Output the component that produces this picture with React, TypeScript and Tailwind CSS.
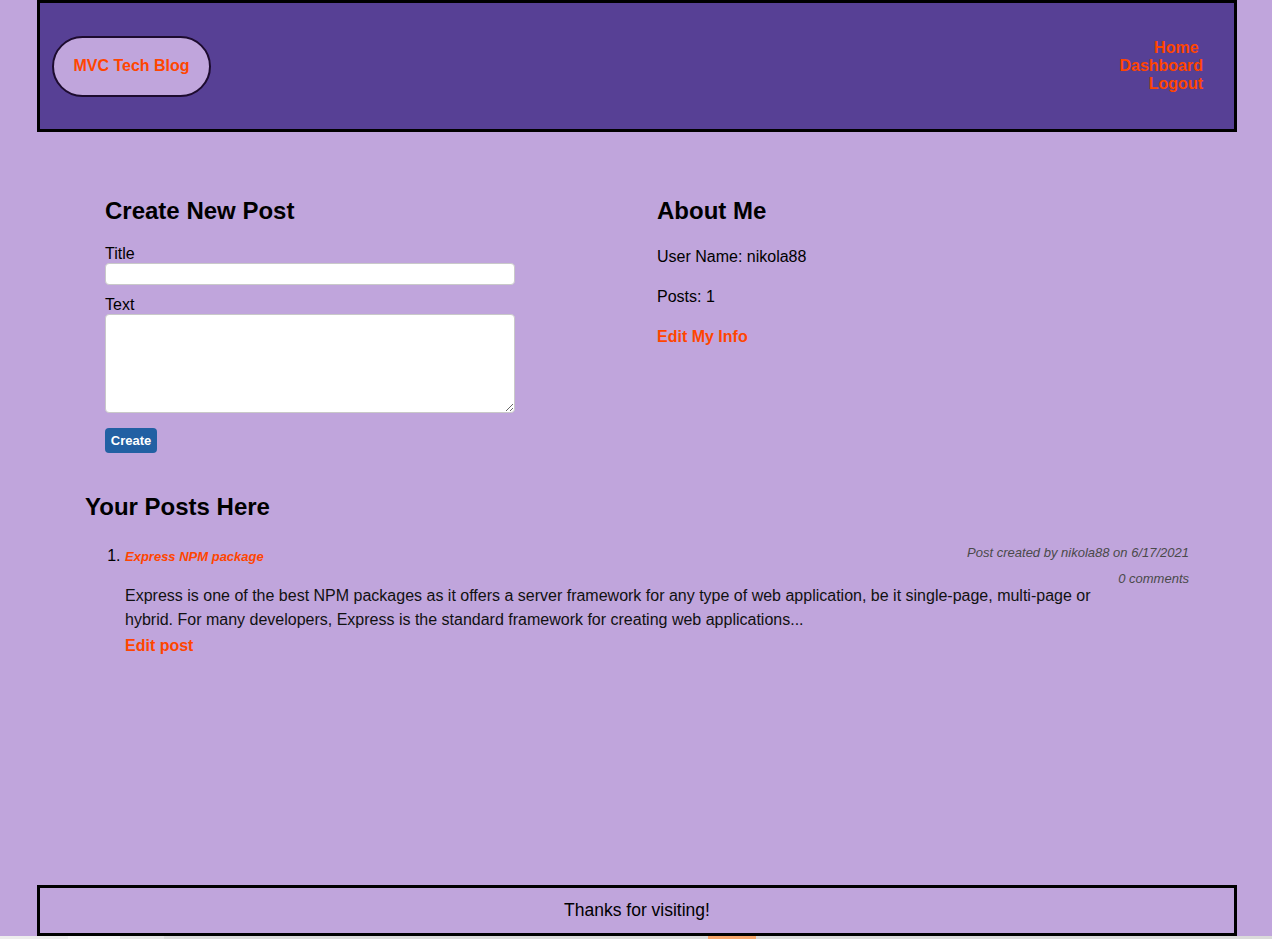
export default function App() {
  const font = { fontFamily: '"Liberation Sans", Arial, sans-serif' };

  return (
    <div style={font} className="h-[939px] flex flex-col bg-[#c0a5dc] text-black overflow-hidden">
      <header className="ml-[37px] w-[1200px] h-[132px] shrink-0 border-[3px] border-black bg-[#574095] flex items-center justify-between pl-[12px] pr-[31px]">
        <a className="w-[159px] h-[61px] rounded-full border-2 border-[#1d0b2f] bg-[#c0a5dc] flex items-center justify-center text-[16px] font-bold text-[#ff4500]">
          MVC Tech Blog
        </a>
        <nav className="flex flex-col items-end text-[16px] font-bold leading-[18px] text-[#ff4500]">
          <a>Home{'\u00a0'}</a>
          <a>Dashboard</a>
          <a>Logout</a>
        </nav>
      </header>

      <main className="ml-[85px] w-[1104px]">
        <section className="mt-[65px] grid grid-cols-2">
          <div className="pl-5">
            <h2 className="text-[24px] leading-[28px] font-bold">Create New Post</h2>
            <form className="flex flex-col items-start">
              <label className="mt-[20px] text-[16px] leading-[18px]">Title</label>
              <input className="w-[410px] h-[22px] bg-white border border-[#c9c9c9] rounded-[4px] px-1 text-[14px]" />
              <label className="mt-[11px] text-[16px] leading-[18px]">Text</label>
              <textarea className="w-[410px] h-[99px] bg-white border border-[#c9c9c9] rounded-[4px] px-1 text-[14px]" />
              <button
                type="button"
                className="mt-[15px] w-[52px] h-[25px] rounded-[4px] bg-[#2260a3] text-white text-[13px] font-bold"
              >
                Create
              </button>
            </form>
          </div>
          <div className="pl-5">
            <h2 className="text-[24px] leading-[28px] font-bold">About Me</h2>
            <p className="mt-[23px] text-[16px] leading-[18px]">User Name: nikola88</p>
            <p className="mt-[22px] text-[16px] leading-[18px]">Posts: 1</p>
            <a className="block mt-[22px] text-[16px] leading-[18px] font-bold text-[#ff4500]">Edit My Info</a>
          </div>
        </section>

        <section className="mt-[40px]">
          <h2 className="text-[24px] leading-[28px] font-bold">Your Posts Here</h2>
          <ol className="mt-[23px] pl-[40px] list-decimal">
            <li className="text-[16px] leading-[24px]">
              <div className="float-right text-right text-[13px] italic text-[#4a4a4a]">
                <p className="pt-[1px] leading-[15px]">Post created by nikola88 on 6/17/2021</p>
                <p className="mt-[14px] leading-[10px]">0 comments</p>
              </div>
              <a className="text-[13px] italic font-bold text-[#ff4500]">Express NPM package</a>
              <p className="clear-right w-[1000px] text-[16px] leading-[24px] text-[#111]">
                Express is one of the best NPM packages as it offers a server framework for any type of web
                application, be it single-page, multi-page or hybrid. For many developers, Express is the standard
                framework for creating web applications...
              </p>
              <a className="block mt-[2px] text-[16px] leading-[24px] font-bold text-[#ff4500]">Edit post</a>
            </li>
          </ol>
        </section>
      </main>

      <footer className="mt-auto ml-[37px] w-[1200px] h-[51px] shrink-0 border-[3px] border-black flex items-center justify-center text-[17.5px]">
        Thanks for visiting!
      </footer>
      <div className="h-[3px] shrink-0 flex bg-[#dadada]">
        <div className="w-[68px] bg-[#ededed]" />
        <div className="w-[52px] bg-[#f7f7f7]" />
        <div className="w-[44px] bg-[#e6e6e6]" />
        <div className="w-[544px]" />
        <div className="w-[48px] bg-[#f5a56a]" />
      </div>
    </div>
  );
}
